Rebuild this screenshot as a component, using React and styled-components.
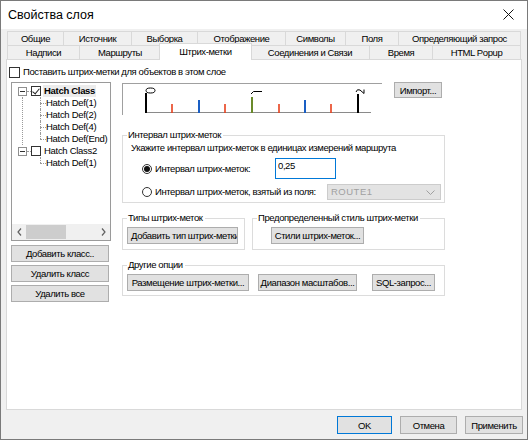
import React from "react";
import styled, { createGlobalStyle, css } from "styled-components";

const Global = createGlobalStyle`
  * { box-sizing: border-box; }
  body {
    margin: 0;
    background: #ffffff;
    font-family: "Liberation Sans", Arial, sans-serif;
    font-size: 9.5px;
    letter-spacing: -0.4px;
    line-height: 12px;
    color: #000;
  }
`;

const font = css`
  font-family: "Liberation Sans", Arial, sans-serif;
  font-size: 9.5px;
  letter-spacing: -0.4px;
  color: #000;
`;

const topTabs = [
  { label: "Общие", w: 57 },
  { label: "Источник", w: 69 },
  { label: "Выборка", w: 67 },
  { label: "Отображение", w: 89 },
  { label: "Символы", w: 61 },
  { label: "Поля", w: 54 },
  { label: "Определяющий запрос", w: 123 },
];

const bottomTabs = [
  { label: "Надписи", w: 73 },
  { label: "Маршруты", w: 82 },
  { label: "Штрих-метки", w: 91, active: true },
  { label: "Соединения и Связи", w: 120 },
  { label: "Время", w: 64 },
  { label: "HTML Popup", w: 89 },
];

function HatchPreview() {
  const ticks = [
    { x: 49, color: "#e8401c", top: 20, w: 1.6 },
    { x: 76, color: "#1a5fc4", top: 16, w: 2 },
    { x: 102, color: "#e8401c", top: 20, w: 1.6 },
    { x: 129, color: "#6a8a2a", top: 13, w: 2 },
    { x: 156, color: "#e8401c", top: 20, w: 1.6 },
    { x: 182, color: "#1a5fc4", top: 16, w: 2 },
    { x: 208, color: "#e8401c", top: 20, w: 1.6 },
  ];
  return (
    <svg width="259" height="30" viewBox="0 0 259 30">
      <line x1="23" y1="28.5" x2="248" y2="28.5" stroke="#8a8a8a" strokeWidth="1" />
      <line x1="23" y1="9" x2="23" y2="29" stroke="#000" strokeWidth="2" />
      <ellipse cx="27.5" cy="6.5" rx="4.5" ry="2.5" fill="#fff" stroke="#000" strokeWidth="1" />
      {ticks.map((t) => (
        <line key={t.x} x1={t.x} y1={t.top} x2={t.x} y2="29" stroke={t.color} strokeWidth={t.w} />
      ))}
      <path d="M128 10 L130.5 7.5 L139 7.5" fill="none" stroke="#000" strokeWidth="1" />
      <line x1="235" y1="10" x2="235" y2="29" stroke="#000" strokeWidth="2" />
      <path d="M233 8 Q234 4.5 237 6 L241 9.5 L241 5.5" fill="none" stroke="#000" strokeWidth="1" />
    </svg>
  );
}

function TreeChild({ label, last }) {
  return (
    <TreeRow $indent={17}>
      <Connector $last={last} />
      <span>{label}</span>
    </TreeRow>
  );
}

export default function App() {
  return (
    <>
      <Global />
      <Window>
        <TitleBar>
          <Title>Свойства слоя</Title>
          <svg width="11" height="11" viewBox="0 0 11 11">
            <path d="M0.5 0.5 L10.5 10.5 M10.5 0.5 L0.5 10.5" stroke="#111" strokeWidth="1" />
          </svg>
        </TitleBar>

        <Body>
          <TabRow>
            {topTabs.map((t) => (
              <Tab key={t.label} $w={t.w}>{t.label}</Tab>
            ))}
          </TabRow>
          <TabRow>
            {bottomTabs.map((t) => (
              <Tab key={t.label} $w={t.w} $active={t.active}>{t.label}</Tab>
            ))}
          </TabRow>

          <Panel>
            <CheckRow>
              <CheckBox />
              <span>Поставить штрих-метки для объектов в этом слое</span>
            </CheckRow>

            <Main>
              <LeftCol>
                <TreeBox>
                  <TreeArea>
                    <TreeRow $indent={6}>
                      <Expander />
                      <HDots />
                      <CheckBox $checked $small />
                      <NodeLabel $bold $selected>Hatch Class</NodeLabel>
                    </TreeRow>
                    <Children $line>
                      <TreeChild label="Hatch Def(1)" />
                      <TreeChild label="Hatch Def(2)" />
                      <TreeChild label="Hatch Def(4)" />
                      <TreeChild label="Hatch Def(End)" last />
                    </Children>
                    <TreeRow $indent={6}>
                      <Expander />
                      <HDots />
                      <CheckBox $small />
                      <NodeLabel>Hatch Class2</NodeLabel>
                    </TreeRow>
                    <Children>
                      <TreeChild label="Hatch Def(1)" last />
                    </Children>
                  </TreeArea>
                  <HScroll>
                    <ScrollArrow>
                      <svg width="5" height="8" viewBox="0 0 5 8">
                        <path d="M4 0.5 L1 4 L4 7.5" fill="none" stroke="#606060" strokeWidth="1.2" />
                      </svg>
                    </ScrollArrow>
                    <Thumb />
                    <ScrollArrow $right>
                      <svg width="5" height="8" viewBox="0 0 5 8">
                        <path d="M1 0.5 L4 4 L1 7.5" fill="none" stroke="#606060" strokeWidth="1.2" />
                      </svg>
                    </ScrollArrow>
                  </HScroll>
                </TreeBox>
                <SideButtons>
                  <Button $w={98}>Добавить класс..</Button>
                  <Button $w={98}>Удалить класс</Button>
                  <Button $w={98}>Удалить все</Button>
                </SideButtons>
              </LeftCol>

              <RightCol>
                <PreviewRow>
                  <Preview>
                    <HatchPreview />
                  </Preview>
                  <Button $w={48} $h={16}>Импорт...</Button>
                </PreviewRow>

                <Group $h={74} $mt={14}>
                  <Legend>Интервал штрих-меток</Legend>
                  <Hint>Укажите интервал штрих-меток в единицах измерений маршрута</Hint>
                  <RadioRow $mt={4}>
                    <RadioLabel $w={133}>
                      <Radio $checked />
                      Интервал штрих-меток:
                    </RadioLabel>
                    <TextInput defaultValue="0,25" />
                  </RadioRow>
                  <RadioRow $mt={5}>
                    <RadioLabel $w={185}>
                      <Radio />
                      Интервал штрих-меток, взятый из поля:
                    </RadioLabel>
                    <Combo>
                      <span>ROUTE1</span>
                      <svg width="9" height="5" viewBox="0 0 9 5">
                        <path d="M0.5 0.5 L4.5 4.5 L8.5 0.5" fill="none" stroke="#a0a0a0" strokeWidth="1" />
                      </svg>
                    </Combo>
                  </RadioRow>
                </Group>

                <GroupLine>
                  <Group $h={38} $w={123} $mt={0}>
                    <Legend>Типы штрих-меток</Legend>
                    <ButtonRow>
                      <Button $w={111} $clip>
                        <u>Д</u>обавить тип штрих-метки
                      </Button>
                    </ButtonRow>
                  </Group>
                  <Group $h={38} $w={193} $mt={0}>
                    <Legend>Предопределенный стиль штрих-метки</Legend>
                    <ButtonRow $pl={14}>
                      <Button $w={93}>Стили штрих-меток...</Button>
                    </ButtonRow>
                  </Group>
                </GroupLine>

                <Group $h={37} $mt={9}>
                  <Legend>Другие опции</Legend>
                  <ButtonRow $gap={9}>
                    <Button $w={122}>Размещение штрих-метки...</Button>
                    <Button $w={99}>Диапазон масштабов...</Button>
                    <Button $w={63} $ml={6}>SQL-запрос...</Button>
                  </ButtonRow>
                </Group>
              </RightCol>
            </Main>
          </Panel>

          <Footer>
            <Button $w={55} $h={18} $default>OK</Button>
            <Button $w={57} $h={18}>Отмена</Button>
            <Button $w={58} $h={18}>Применить</Button>
          </Footer>
        </Body>
      </Window>
    </>
  );
}

const Window = styled.div`
  width: 528px;
  height: 440px;
  border: 1px solid #7a7a7a;
  background: #f0f0f0;
  display: flex;
  flex-direction: column;
  overflow: hidden;
`;

const TitleBar = styled.div`
  height: 28px;
  background: #ffffff;
  display: flex;
  align-items: center;
  justify-content: space-between;
  padding: 0 13px 1px 7px;
`;

const Title = styled.div`
  font-size: 12.5px;
  letter-spacing: 0;
  color: #000;
`;

const Body = styled.div`
  flex: 1;
  padding: 2px 0 0 5px;
  display: flex;
  flex-direction: column;
`;

const TabRow = styled.div`
  display: flex;
  height: 14px;
  padding-left: 2px;
  position: relative;
  z-index: 1;
`;

const Tab = styled.div`
  width: ${(p) => p.$w}px;
  height: 14px;
  margin-left: -1px;
  border: 1px solid #d9d9d9;
  border-bottom: none;
  background: #f0f0f0;
  display: flex;
  align-items: center;
  justify-content: center;
  white-space: nowrap;
  padding-top: 1px;
  ${(p) =>
    p.$active &&
    css`
      background: #ffffff;
      height: 17px;
      margin-top: -2px;
      margin-left: -2px;
      margin-right: -1px;
      width: ${p.$w + 2}px;
      padding-top: 0;
      position: relative;
      z-index: 2;
    `}
`;

const Panel = styled.div`
  width: 516px;
  height: 351px;
  background: #ffffff;
  border: 1px solid #d9d9d9;
  display: flex;
  flex-direction: column;
`;

const CheckRow = styled.div`
  display: flex;
  align-items: center;
  gap: 3px;
  margin-top: 6px;
  padding-left: 2px;
  height: 12px;
`;

const CheckBox = styled.span`
  width: ${(p) => (p.$small ? 10 : 11)}px;
  height: ${(p) => (p.$small ? 10 : 11)}px;
  border: 1px solid #333;
  background: #fff;
  flex-shrink: 0;
  position: relative;
  ${(p) =>
    p.$checked &&
    css`
      &::after {
        content: "";
        position: absolute;
        left: 2px;
        top: 0px;
        width: 3px;
        height: 6px;
        border: solid #222;
        border-width: 0 1.3px 1.3px 0;
        transform: rotate(40deg);
      }
    `}
`;

const Main = styled.div`
  display: flex;
  margin-top: 4px;
  padding-left: 4px;
`;

const LeftCol = styled.div`
  width: 100px;
  display: flex;
  flex-direction: column;
`;

const TreeBox = styled.div`
  height: 159px;
  border: 1px solid #9a9a9a;
  display: flex;
  flex-direction: column;
`;

const TreeArea = styled.div`
  flex: 1;
  padding-top: 2px;
  font-size: 9.5px;
  letter-spacing: -0.3px;
`;

const TreeRow = styled.div`
  display: flex;
  align-items: center;
  height: 12px;
  padding-left: ${(p) => p.$indent}px;
  white-space: nowrap;
`;

const Expander = styled.span`
  width: 9px;
  height: 9px;
  border: 1px solid #8f8f8f;
  background: #fff;
  position: relative;
  flex-shrink: 0;
  &::after {
    content: "";
    position: absolute;
    left: 1px;
    top: 3px;
    width: 5px;
    border-top: 1px solid #333;
  }
`;

const HDots = styled.span`
  width: 4px;
  border-top: 1px dotted #9a9a9a;
`;

const NodeLabel = styled.span`
  margin-left: 2px;
  padding: 0 1px;
  line-height: 12px;
  font-weight: ${(p) => (p.$bold ? 700 : 400)};
  background: ${(p) => (p.$selected ? "#ececec" : "transparent")};
`;

const Children = styled.div`
  margin-left: 10px;
  border-left: 1px dotted ${(p) => (p.$line ? "#9a9a9a" : "transparent")};
`;

const Connector = styled.span`
  width: 6px;
  height: 12px;
  position: relative;
  flex-shrink: 0;
  &::before {
    content: "";
    position: absolute;
    left: 0;
    top: 0;
    height: ${(p) => (p.$last ? 6 : 12)}px;
    border-left: 1px dotted #9a9a9a;
  }
  &::after {
    content: "";
    position: absolute;
    left: 0;
    top: 6px;
    width: 6px;
    border-top: 1px dotted #9a9a9a;
  }
`;

const HScroll = styled.div`
  height: 16px;
  background: #f0f0f0;
  display: flex;
  align-items: stretch;
`;

const ScrollArrow = styled.div`
  width: 14px;
  display: flex;
  align-items: center;
  justify-content: center;
  margin-left: ${(p) => (p.$right ? "auto" : "0")};
`;

const Thumb = styled.div`
  width: 40px;
  margin: 1px 0;
  background: #cdcdcd;
`;

const SideButtons = styled.div`
  display: flex;
  flex-direction: column;
  gap: 3px;
  margin-top: 4px;
`;

const Button = styled.button`
  ${font}
  width: ${(p) => p.$w}px;
  height: ${(p) => p.$h || 17}px;
  margin-left: ${(p) => p.$ml || 0}px;
  flex-shrink: 0;
  background: #e1e1e1;
  border: 1px solid ${(p) => (p.$default ? "#0078d7" : "#adadad")};
  padding: 0;
  white-space: nowrap;
  overflow: hidden;
  ${(p) =>
    p.$clip &&
    css`
      text-align: left;
      padding-left: 3px;
    `}
`;

const RightCol = styled.div`
  margin-left: 11px;
  width: 323px;
  display: flex;
  flex-direction: column;
`;

const PreviewRow = styled.div`
  display: flex;
  align-items: flex-start;
  gap: 12px;
`;

const Preview = styled.div`
  width: 260px;
  height: 32px;
  margin-top: 1px;
  border-top: 1px solid #a0a0a0;
  border-left: 1px solid #a0a0a0;
`;

const Group = styled.fieldset`
  margin: ${(p) => p.$mt}px 0 0 0;
  padding: 0 0 0 8px;
  width: ${(p) => (p.$w ? `${p.$w}px` : "auto")};
  height: ${(p) => p.$h}px;
  border: 1px solid #dcdcdc;
  min-width: 0;
`;

const Legend = styled.legend`
  padding: 0 2px 0 1px;
  margin-left: -4px;
  line-height: 12px;
`;

const Hint = styled.div`
  line-height: 12px;
  margin-top: 1px;
`;

const RadioRow = styled.div`
  display: flex;
  align-items: center;
  margin-top: ${(p) => p.$mt}px;
  padding-left: 11px;
`;

const RadioLabel = styled.label`
  width: ${(p) => p.$w}px;
  display: flex;
  align-items: center;
  gap: 3px;
  flex-shrink: 0;
  white-space: nowrap;
`;

const Radio = styled.span`
  width: 10px;
  height: 10px;
  border-radius: 50%;
  border: 1px solid #333;
  background: #fff;
  flex-shrink: 0;
  display: flex;
  align-items: center;
  justify-content: center;
  &::after {
    content: "";
    width: 6px;
    height: 6px;
    border-radius: 50%;
    background: ${(p) => (p.$checked ? "#111" : "transparent")};
  }
`;

const TextInput = styled.input`
  ${font}
  width: 61px;
  height: 21px;
  border: 1px solid #0078d7;
  padding: 0 0 7px 2px;
  outline: none;
`;

const Combo = styled.div`
  width: 114px;
  height: 16px;
  background: #e3e3e3;
  border: 1px solid #cccccc;
  color: #a0a0a0;
  display: flex;
  align-items: center;
  justify-content: space-between;
  padding: 0 5px 0 3px;
  letter-spacing: 0.5px;
`;

const GroupLine = styled.div`
  display: flex;
  gap: 7px;
  margin-top: 9px;
`;

const ButtonRow = styled.div`
  display: flex;
  gap: ${(p) => p.$gap || 0}px;
  padding-left: ${(p) => p.$pl || 0}px;
  margin-top: 3px;
  margin-left: -4px;
`;

const Footer = styled.div`
  display: flex;
  justify-content: flex-end;
  gap: 8px;
  padding: 6px 4px 0 0;
`;
